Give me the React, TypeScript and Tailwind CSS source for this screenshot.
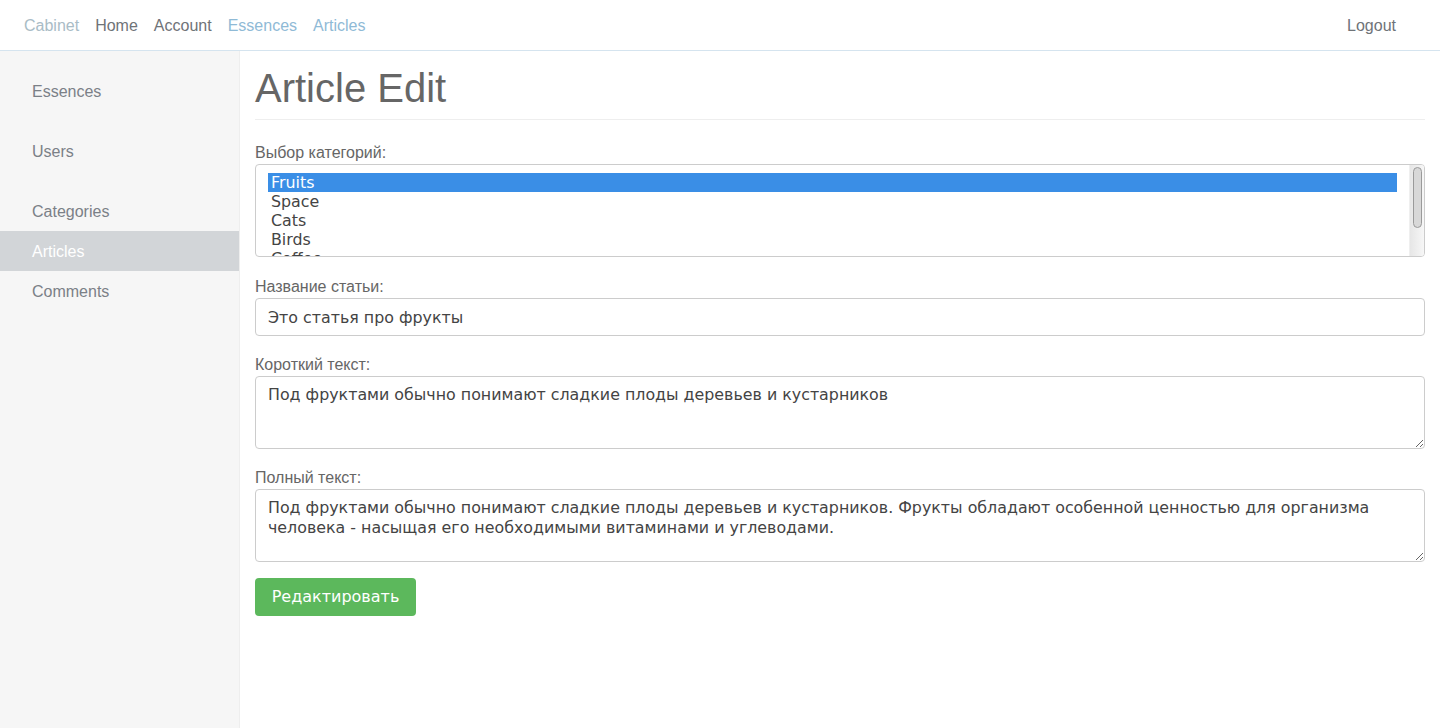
import React from "react";

const sans = { fontFamily: '"Liberation Sans", Arial, sans-serif' };
const deja = { fontFamily: '"DejaVu Sans", Verdana, sans-serif' };

export default function App() {
  const cats = ["Fruits", "Space", "Cats", "Birds", "Coffee"];
  const item = "h-[40px] flex items-center pl-[32px] pt-[2px]";
  const label = "block h-[20px] pt-[1px] leading-[19px] text-[16px] text-[#666666] mb-[2px]";
  return (
    <div className="min-h-[728px] bg-white flex flex-col" style={sans}>
      <nav className="h-[51px] flex items-center justify-between border-b border-[#d5e4ef] px-[24px] pt-[2px] text-[16px] shrink-0">
        <div className="flex items-center gap-[16px]">
          <span className="text-[#a9bcc6]">Cabinet</span>
          <span className="text-[#6f7378]">Home</span>
          <span className="text-[#6f7378]">Account</span>
          <span className="text-[#8fbad6]">Essences</span>
          <span className="text-[#8fbad6]">Articles</span>
        </div>
        <span className="text-[#6f7378] mr-[20px]">Logout</span>
      </nav>
      <div className="flex flex-1">
        <aside className="w-[240px] shrink-0 bg-[#f6f6f6] border-r border-[#eeeeee] pt-[20px] text-[16px] min-h-[677px]">
          <div className={item + " text-[#7b8087]"}>Essences</div>
          <div className={item + " text-[#7b8087] mt-[20px]"}>Users</div>
          <div className={item + " text-[#7b8087] mt-[20px]"}>Categories</div>
          <div className={item + " text-white bg-[#d2d5d8]"}>Articles</div>
          <div className={item + " text-[#7b8087]"}>Comments</div>
        </aside>
        <main className="flex-1 px-[15px] pt-[15px]">
          <div className="border-b border-[#eeeeee] pb-[9px]">
            <h1 className="text-[40px] leading-[44px] text-[#666666]">Article Edit</h1>
          </div>
          <form className="mt-[22px]" onSubmit={(e) => e.preventDefault()}>
            <div className="mb-[19px]">
              <label className={label}>Выбор категорий:</label>
              <div className="h-[93px] border border-[#cccccc] rounded-[4px] overflow-hidden flex" style={deja}>
                <div className="flex-1 overflow-hidden px-[12px] pt-[8px]">
                  {cats.map((c, i) => (
                    <div
                      key={c}
                      className={
                        "h-[19px] leading-[19px] text-[15.85px] pl-[3px] whitespace-nowrap " +
                        (i === 0 ? "bg-[#3a8ee6] text-white" : "text-[#444444]")
                      }
                    >
                      {c}
                    </div>
                  ))}
                </div>
                <div className="w-[15px] shrink-0 bg-gradient-to-r from-[#e6e6e6] to-[#f7f7f7] border-l border-[#efefef] pt-[2px] flex justify-center">
                  <div className="w-[9px] h-[61px] rounded-full border border-[#9a9a9a] bg-[#d8d8d8]" />
                </div>
              </div>
            </div>
            <div className="mb-[18px]">
              <label className={label}>Название статьи:</label>
              <input
                defaultValue="Это статья про фрукты"
                className="block w-full h-[38px] border border-[#cccccc] rounded-[4px] px-[12px] text-[15.85px] text-[#444444] outline-none"
                style={deja}
              />
            </div>
            <div className="mb-[18px]">
              <label className={label}>Короткий текст:</label>
              <textarea
                defaultValue="Под фруктами обычно понимают сладкие плоды деревьев и кустарников"
                className="block w-full h-[73px] border border-[#cccccc] rounded-[4px] px-[12px] py-[8px] text-[15.85px] leading-[20px] text-[#444444] outline-none"
                style={deja}
              />
            </div>
            <div className="mb-[16px]">
              <label className={label}>Полный текст:</label>
              <textarea
                defaultValue="Под фруктами обычно понимают сладкие плоды деревьев и кустарников. Фрукты обладают особенной ценностью для организма человека - насыщая его необходимыми витаминами и углеводами."
                className="block w-full h-[73px] border border-[#cccccc] rounded-[4px] px-[12px] py-[8px] text-[15.85px] leading-[20px] text-[#444444] outline-none"
                style={deja}
              />
            </div>
            <button
              type="submit"
              className="block h-[38px] w-[161px] bg-[#5cb85c] rounded-[4px] text-white text-[16px]"
              style={deja}
            >
              Редактировать
            </button>
          </form>
        </main>
      </div>
    </div>
  );
}
